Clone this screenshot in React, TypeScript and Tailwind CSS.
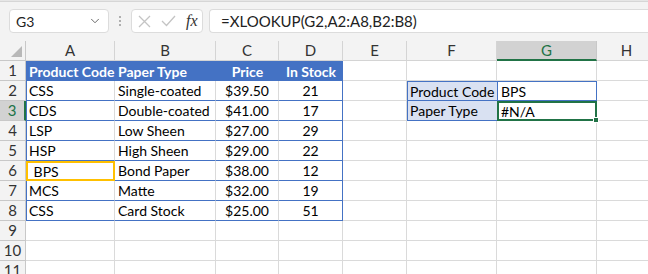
import { ChevronDown } from "lucide-react";

const cols = [89, 101, 63, 64, 64, 90, 100, 60];
const letters = ["A", "B", "C", "D", "E", "F", "G", "H"];

type Row = { code: string; type: string; price: string; stock: string };

const rows: Row[] = [
  { code: "CSS", type: "Single-coated", price: "$39.50", stock: "21" },
  { code: "CDS", type: "Double-coated", price: "$41.00", stock: "17" },
  { code: "LSP", type: "Low Sheen", price: "$27.00", stock: "29" },
  { code: "HSP", type: "High Sheen", price: "$29.00", stock: "22" },
  { code: "\u00a0BPS", type: "Bond Paper", price: "$38.00", stock: "12" },
  { code: "MCS", type: "Matte", price: "$32.00", stock: "19" },
  { code: "CSS", type: "Card Stock", price: "$25.00", stock: "51" },
];

const font = { fontFamily: "Lato, 'Liberation Sans', sans-serif" };

function FormulaBar() {
  return (
    <div className="h-[41px] bg-[#f3f3f3]">
      <div className="h-[2px] border-b border-[#d6d6d6] bg-[#e6e6e6]" />
      <div className="flex items-center pl-[9px] pt-[7px]">
        <div className="flex h-[24px] w-[100px] items-center justify-between rounded-[4px] border border-[#dcdcdc] bg-white pl-[6px] pr-[6px] text-[14px] text-[#222]">
          <span>G3</span>
          <ChevronDown className="size-[14px] text-[#555]" strokeWidth={1.5} />
        </div>
        <div className="flex w-[22px] flex-col items-center gap-[2px]">
          <span className="size-[2px] rounded-full bg-[#999]" />
          <span className="size-[2px] rounded-full bg-[#999]" />
          <span className="size-[2px] rounded-full bg-[#999]" />
        </div>
        <div className="flex h-[24px] w-[72px] items-center gap-[10px] rounded-[4px] border border-[#dcdcdc] bg-white pl-[6px]">
          <svg width="13" height="13" viewBox="0 0 13 13" stroke="#c4c4c4" strokeWidth="1.3" fill="none">
            <path d="M1 1 L12 12 M12 1 L1 12" />
          </svg>
          <svg width="15" height="12" viewBox="0 0 15 12" stroke="#c4c4c4" strokeWidth="1.3" fill="none">
            <path d="M1 6 L5.5 10.5 L14 1" />
          </svg>
          <span className="text-[16px] italic text-[#333]" style={{ fontFamily: "'Liberation Serif', serif" }}>
            fx
          </span>
        </div>
        <div className="ml-[6px] flex h-[24px] flex-1 items-center rounded-l-[4px] border border-r-0 border-[#dcdcdc] bg-white pl-[11px] text-[15px] text-[#222]">
          =XLOOKUP(G2,A2:A8,B2:B8)
        </div>
      </div>
    </div>
  );
}

function ColumnHeaders() {
  return (
    <div className="flex h-[20px] bg-[#f3f3f3] text-[15px] text-[#333]">
      <div className="relative w-[26px] shrink-0 border-r border-b border-[#c8c8c8]">
        <svg className="absolute right-[3px] bottom-[3px]" width="11" height="11" viewBox="0 0 11 11">
          <path d="M11 0 L11 11 L0 11 Z" fill="#b8b8b8" />
        </svg>
      </div>
      {letters.map((l, i) => (
        <div
          key={l}
          style={{ width: cols[i] }}
          className={
            l === "G"
              ? "flex shrink-0 items-center justify-center border-r border-b-2 border-r-[#c8c8c8] border-b-[#217346] bg-[#d2d2d2] text-[#217346]"
              : "flex shrink-0 items-center justify-center border-r border-b border-[#d4d4d4]"
          }
        >
          {l}
        </div>
      ))}
    </div>
  );
}

function Cell({
  w,
  children,
  className = "",
}: {
  w: number;
  children?: React.ReactNode;
  className?: string;
}) {
  return (
    <div style={{ width: w }} className={`flex h-[20px] shrink-0 items-center overflow-visible whitespace-nowrap ${className}`}>
      {children}
    </div>
  );
}

function RowHead({ n, active }: { n: number; active?: boolean }) {
  return (
    <div
      className={
        active
          ? "flex h-[20px] w-[26px] shrink-0 items-center justify-center border-r-2 border-b border-r-[#217346] border-b-[#c8c8c8] bg-[#d2d2d2] text-[15px] text-[#217346]"
          : "flex h-[20px] w-[26px] shrink-0 items-center justify-center border-r border-b border-[#c8c8c8] bg-[#f3f3f3] text-[15px] text-[#333]"
      }
    >
      {n}
    </div>
  );
}

export default function App() {
  const grid = "border-r border-b border-[#dadada]";
  return (
    <div className="h-[274px] w-[648px] overflow-hidden bg-white text-[14px] text-black" style={font}>
      <FormulaBar />
      <ColumnHeaders />

      {/* row 1 - table header */}
      <div className="flex">
        <RowHead n={1} />
        <div className="flex bg-[#4472c4] font-bold text-white">
          <Cell w={89} className="pl-[3px]">Product Code</Cell>
          <Cell w={101} className="pl-[3px]">Paper Type</Cell>
          <Cell w={63} className="justify-center">Price</Cell>
          <Cell w={64} className="justify-center">In Stock</Cell>
        </div>
        <Cell w={64} className={grid} />
        <Cell w={90} className={grid} />
        <Cell w={100} className={grid} />
        <Cell w={60} className={grid} />
      </div>

      {rows.map((r, i) => {
        const n = i + 2;
        const edge = "border-b border-b-[#4472c4]";
        return (
          <div key={n} className="flex">
            <RowHead n={n} active={n === 3} />
            <Cell
              w={89}
              className={
                n === 6
                  ? "border-2 border-[#ffc000] pl-[2px]"
                  : `border-r border-r-[#dadada] border-l border-l-[#4472c4] pl-[2px] ${edge}`
              }
            >
              {r.code}
            </Cell>
            <Cell w={101} className={`border-r border-r-[#dadada] pl-[3px] ${edge}`}>
              {r.type}
            </Cell>
            <Cell w={63} className={`justify-center border-r border-r-[#dadada] ${edge}`}>
              {r.price}
            </Cell>
            <Cell w={64} className={`justify-center border-r border-r-[#4472c4] ${edge}`}>
              {r.stock}
            </Cell>
            <Cell w={64} className={grid} />
            {n === 2 && (
              <>
                <Cell w={90} className="border border-r-0 border-[#4472c4] bg-[#d9e1f2] pl-[2px]">
                  Product Code
                </Cell>
                <Cell w={100} className="border border-[#4472c4] pl-[3px]">
                  BPS
                </Cell>
              </>
            )}
            {n === 3 && (
              <>
                <Cell w={90} className="border-r-0 border-b border-l border-[#4472c4] bg-[#d9e1f2] pl-[2px]">
                  Paper Type
                </Cell>
                <Cell w={100} className="relative border-2 border-[#217346] pl-[2px]">
                  #N/A
                  <span className="absolute -right-[4px] -bottom-[4px] size-[6px] border border-white bg-[#217346]" />
                </Cell>
              </>
            )}
            {n > 3 && (
              <>
                <Cell w={90} className={grid} />
                <Cell w={100} className={grid} />
              </>
            )}
            <Cell w={60} className={grid} />
          </div>
        );
      })}

      {[9, 10, 11].map((n) => (
        <div key={n} className="flex">
          <RowHead n={n} />
          {cols.map((w, i) => (
            <Cell key={i} w={w} className={grid} />
          ))}
        </div>
      ))}
    </div>
  );
}
